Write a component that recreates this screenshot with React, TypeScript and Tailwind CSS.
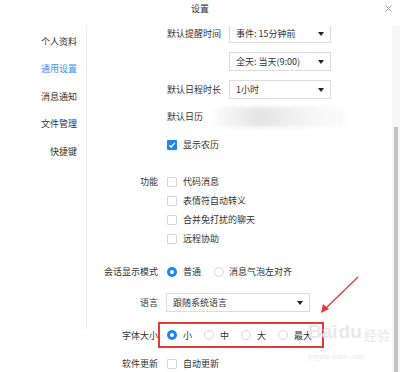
import React from "react";

const font = { fontFamily: '"Noto Sans CJK SC", "Noto Sans", sans-serif' };

function Select({ text, w }: { text: string; w: string }) {
  return (
    <div className={`flex h-[19px] ${w} items-center justify-between border border-[#dcdcdc] bg-white pl-[6px] pr-[6px]`}>
      <span className="text-[9px] leading-none text-[#333]">{text}</span>
      <svg width="6" height="4" viewBox="0 0 6 4"><path d="M0 0 H6 L3 4 Z" fill="#222" /></svg>
    </div>
  );
}

function Check({ on = false }: { on?: boolean }) {
  return on ? (
    <div className="flex h-[10px] w-[10px] items-center justify-center rounded-[1px] bg-[#1d84f0]">
      <svg width="8" height="8" viewBox="0 0 8 8"><path d="M1.3 4.2 L3.2 6 L6.8 1.8" stroke="#fff" strokeWidth="1.3" fill="none" /></svg>
    </div>
  ) : (
    <div className="h-[10px] w-[10px] rounded-[1px] border border-[#d6d6d6] bg-white" />
  );
}

function Radio({ on = false }: { on?: boolean }) {
  return on ? (
    <div className="flex h-[10px] w-[10px] items-center justify-center rounded-full bg-[#1d84f0]">
      <div className="h-[4px] w-[4px] rounded-full bg-white" />
    </div>
  ) : (
    <div className="h-[10px] w-[10px] rounded-full border border-[#d6d6d6] bg-white" />
  );
}

function Row({ label, children, cls }: { label?: string; children?: React.ReactNode; cls: string }) {
  return (
    <div className={`relative flex items-center ${cls}`}>
      <div className="w-[71px] shrink-0 text-right text-[9px] leading-none text-[#333]">{label}</div>
      <div className="ml-[9px] flex items-center">{children}</div>
    </div>
  );
}

export default function App() {
  return (
    <div className="relative h-[372px] w-[400px] overflow-hidden bg-white" style={font}>
      {/* header */}
      <div className="relative flex h-[26px] items-start justify-center pt-[4px]">
        <span className="text-[9px] leading-[10px] text-[#333]">设置</span>
        <svg className="absolute right-[8px] top-[5px]" width="7" height="7" viewBox="0 0 7 7">
          <path d="M0.5 0.5 L6.5 6.5 M6.5 0.5 L0.5 6.5" stroke="#9a9a9a" strokeWidth="0.9" />
        </svg>
      </div>

      <div className="flex h-[346px]">
        {/* sidebar */}
        <div className="flex h-[304px] w-[87px] shrink-0 flex-col items-end border-r border-[#ececec] pr-[9px] pt-[10px] text-[9px] leading-none text-[#333]">
          <div className="flex h-[10px] items-center">个人资料</div>
          <div className="mt-[17.5px] flex h-[10px] items-center text-[#3a8ef2]">通用设置</div>
          <div className="mt-[17.5px] flex h-[10px] items-center">消息通知</div>
          <div className="mt-[17.5px] flex h-[10px] items-center">文件管理</div>
          <div className="mt-[17.5px] flex h-[10px] items-center">快捷键</div>
        </div>

        {/* content */}
        <div className="relative flex-1 overflow-hidden pt-[2px]">
          <div className="flex flex-col">
            <Row cls="mt-[-4px] h-[19px]">
              <span className="w-[62px] text-[9px] leading-none text-[#333]">默认提醒时间</span>
              <Select text="事件: 15分钟前" w="w-[102px]" />
            </Row>
            <Row cls="mt-[9px] h-[19px]">
              <span className="w-[62px]" />
              <Select text="全天: 当天(9:00)" w="w-[102px]" />
            </Row>
            <Row cls="mt-[9px] h-[19px]">
              <span className="w-[62px] text-[9px] leading-none text-[#333]">默认日程时长</span>
              <Select text="1小时" w="w-[102px]" />
            </Row>
            <Row cls="mt-[8px] h-[19px]">
              <span className="w-[48px] text-[9px] leading-none text-[#333]">默认日历</span>
              <div className="h-[20px] w-[130px] bg-[linear-gradient(90deg,#fafafa_0%,#e4e4e4_35%,#eeeeee_55%,#f6f6f6_75%,#fbfbfb_100%)] blur-[2px]" />
            </Row>
            <Row cls="mt-[9px] h-[19px]">
              <Check on />
              <span className="ml-[6px] text-[9px] leading-none text-[#333]">显示农历</span>
            </Row>
            <Row label="功能" cls="mt-[18px] h-[19px]">
              <Check />
              <span className="ml-[6px] text-[9px] leading-none text-[#333]">代码消息</span>
            </Row>
            <Row cls="h-[19px]">
              <Check />
              <span className="ml-[6px] text-[9px] leading-none text-[#333]">表情符自动转义</span>
            </Row>
            <Row cls="h-[19px]">
              <Check />
              <span className="ml-[6px] text-[9px] leading-none text-[#333]">合并免打扰的聊天</span>
            </Row>
            <Row cls="h-[19px]">
              <Check />
              <span className="ml-[6px] text-[9px] leading-none text-[#333]">远程协助</span>
            </Row>
            <Row label="会话显示模式" cls="mt-[14px] h-[19px]">
              <div className="flex w-[47px] items-center">
                <Radio on />
                <span className="ml-[6px] text-[9px] leading-none text-[#333]">普通</span>
              </div>
              <Radio />
              <span className="ml-[5px] text-[9px] leading-none text-[#333]">消息气泡左对齐</span>
            </Row>
            <div className="mt-[12px] flex h-[19px] items-center">
              <div className="w-[71px] text-right text-[9px] leading-none text-[#333]">语言</div>
              <div className="ml-[8px]">
                <Select text="跟随系统语言" w="w-[144px]" />
              </div>
            </div>
            <Row label="字体大小" cls="mt-[10px] h-[26px]">
              {["小", "中", "大", "最大"].map((t, i) => (
                <div key={t} className="flex w-[37px] items-center">
                  <Radio on={i === 0} />
                  <span className="ml-[6px] text-[9px] leading-none text-[#333]">{t}</span>
                </div>
              ))}
              <div className="absolute left-[71px] top-0 h-[26px] w-[166px] border-2 border-[#e53935]" />
            </Row>
            <Row label="软件更新" cls="mt-[6px] h-[19px]">
              <Check />
              <span className="ml-[6px] text-[9px] leading-none text-[#333]">自动更新</span>
            </Row>
          </div>

          {/* watermark */}
          <div className="pointer-events-none absolute left-[221px] top-[296px] flex items-end text-[#e8e8e8]">
            <span className="text-[19px] font-bold leading-none" style={{ fontFamily: '"Liberation Sans", sans-serif' }}>Bai</span>
            <span className="ml-[1px] text-[19px] font-bold leading-none" style={{ fontFamily: '"Liberation Sans", sans-serif' }}>du</span>
            <span className="ml-[2px] text-[13px] leading-none">经验</span>
          </div>
          <div className="pointer-events-none absolute left-[221px] top-[327px] text-[7px] leading-none text-[#ebebeb]" style={{ fontFamily: '"Liberation Sans", sans-serif' }}>
            jingyan.baidu.com
          </div>

          {/* arrow */}
          <svg className="pointer-events-none absolute left-[225px] top-[248px]" width="50" height="42" viewBox="0 0 50 42">
            <path d="M46 3 L12 36" stroke="#e53935" strokeWidth="1.3" />
            <path d="M9 39 L11 30 L17 35 Z" fill="#e53935" />
          </svg>

          {/* scrollbar */}
          <div className="absolute right-0 top-0 h-full w-[8px] bg-[#f7f7f7]">
            <div className="absolute left-[2px] top-[101px] h-[260px] w-[4px] bg-[#c2c2c2]" />
          </div>
        </div>
      </div>
    </div>
  );
}
